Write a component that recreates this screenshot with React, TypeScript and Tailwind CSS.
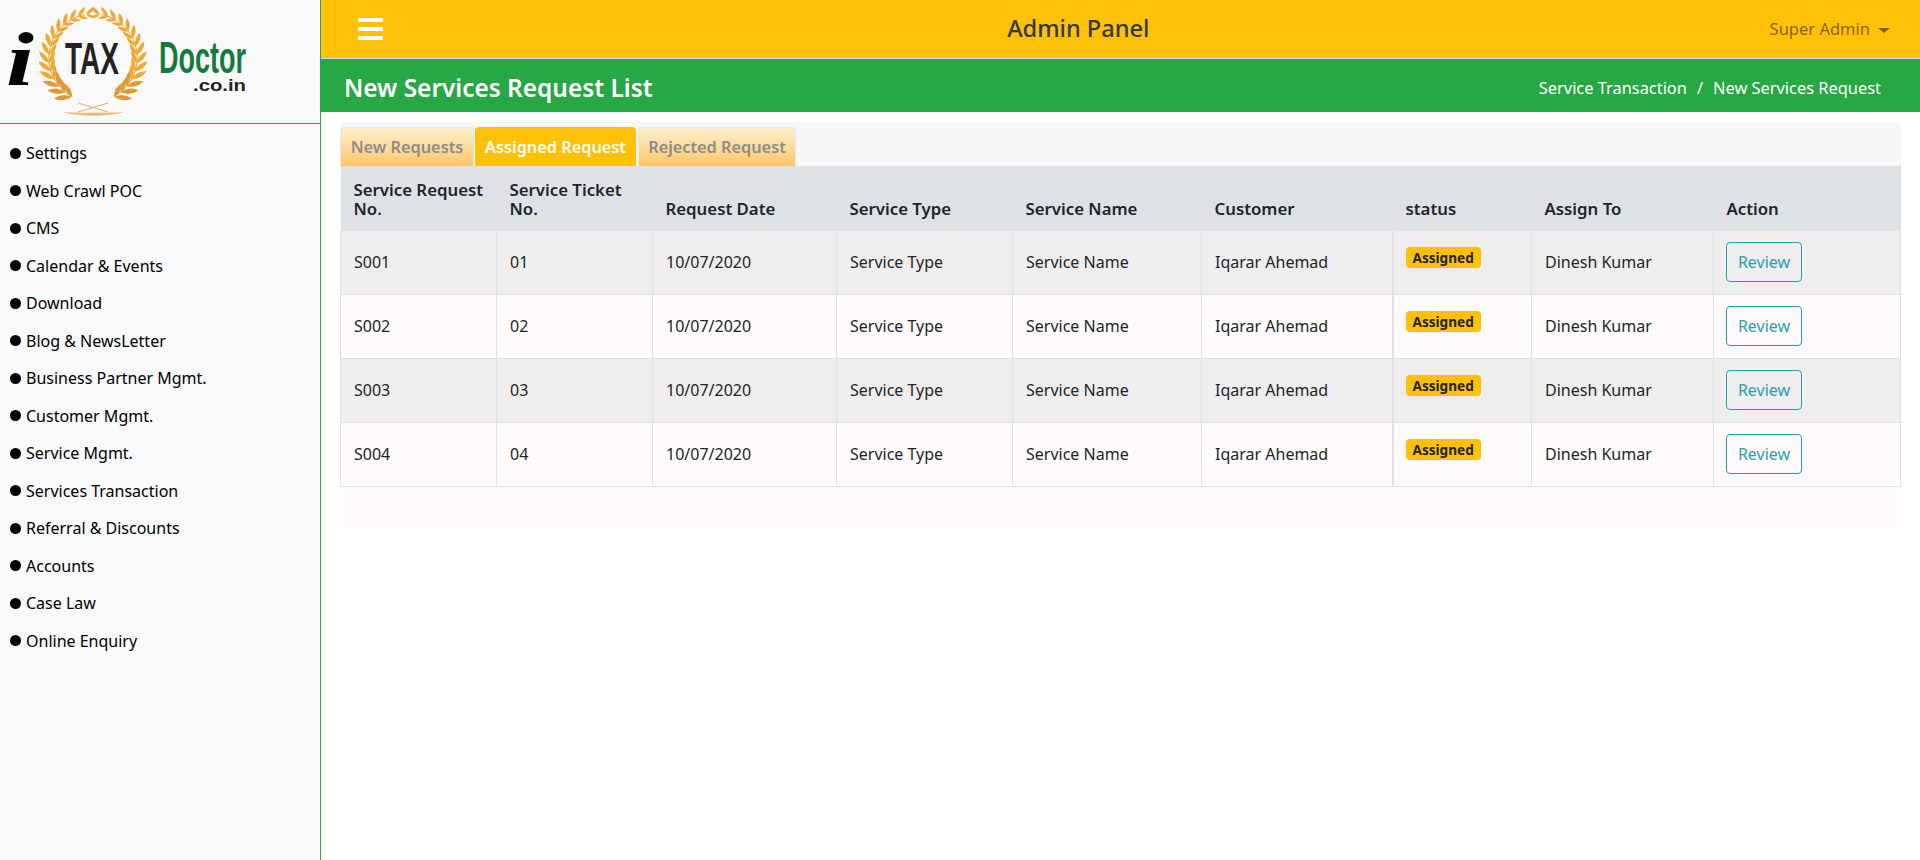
const menuItems = [
  "Settings",
  "Web Crawl POC",
  "CMS",
  "Calendar & Events",
  "Download",
  "Blog & NewsLetter",
  "Business Partner Mgmt.",
  "Customer Mgmt.",
  "Service Mgmt.",
  "Services Transaction",
  "Referral & Discounts",
  "Accounts",
  "Case Law",
  "Online Enquiry",
];

const requests = [
  { id: "S001", ticket: "01" },
  { id: "S002", ticket: "02" },
  { id: "S003", ticket: "03" },
  { id: "S004", ticket: "04" },
];

// one side of the wreath, angles in degrees from the top going clockwise
const leaves = Array.from({ length: 14 }, (_, i) => 9 + i * 11);

const Leaf = ({ angle, turn, len, wide, color }: { angle: number; turn: number; len: number; wide: number; color: string }) => (
  <path
    transform={`rotate(${angle}) translate(0 -44) rotate(${turn})`}
    d={`M0 0 Q ${len / 2} ${wide} ${len} 0 Q ${len / 2} ${-wide} 0 0Z`}
    fill={color}
  />
);

const Wreath = () => (
  <g>
    {[1, -1].map((side) => (
      <g key={side} transform={`translate(93 58) scale(${side} 1)`}>
        <path d="M8 -43.5 A44 44 0 0 1 22 38" fill="none" stroke="#e0a035" strokeWidth="1" />
        {leaves.map((a) => {
          const len = 11 + (a / 160) * 8;
          const wide = 3.4 + (a / 160) * 2;
          const color = a > 125 ? "#dd9b36" : "#f0a832";
          return (
            <g key={a}>
              <Leaf angle={a} turn={213} len={len} wide={wide} color={color} />
              <Leaf angle={a} turn={150} len={len - 2} wide={wide - 0.6} color={color} />
            </g>
          );
        })}
      </g>
    ))}
    <path d="M62 112 C 78 117 108 117 124 112 C 108 113 78 113 62 112Z" fill="#e9bd7c" />
    <path d="M78 103 L108 112 M108 103 L78 112" stroke="#e2b06a" strokeWidth="1" fill="none" />
  </g>
);

const Logo = () => (
  <svg width="320" height="123" viewBox="0 0 320 123" className="block">
    <Wreath />
    <text x="6" y="85" fontFamily="'Liberation Serif', serif" fontWeight="700" fontStyle="italic" fontSize="76" fill="#050505" textLength="28" lengthAdjust="spacingAndGlyphs">
      i
    </text>
    <text x="65" y="74" fontFamily="'Liberation Sans', sans-serif" fontWeight="700" fontSize="45" fill="#222" textLength="54" lengthAdjust="spacingAndGlyphs">
      TAX
    </text>
    <text x="159" y="73" fontFamily="'Liberation Sans', sans-serif" fontWeight="700" fontSize="44" fill="#137a3c" textLength="87" lengthAdjust="spacingAndGlyphs">
      Doctor
    </text>
    <text x="193" y="91" fontFamily="'Liberation Sans', sans-serif" fontWeight="700" fontSize="17" fill="#222" textLength="53" lengthAdjust="spacingAndGlyphs">
      .co.in
    </text>
  </svg>
);

const Sidebar = () => (
  <aside className="w-[321px] shrink-0 border-r border-[#28a745] bg-[#f8f9fa]">
    <div className="h-[124px] border-b border-[#28a745]">
      <Logo />
    </div>
    <ul className="pt-[10.5px]">
      {menuItems.map((item) => (
        <li key={item} className="flex h-[37.5px] items-center pl-[10px] text-[16px] text-black">
          <span className="mr-[5px] size-[11px] rounded-full bg-black" />
          {item}
        </li>
      ))}
    </ul>
  </aside>
);

const TopBar = () => (
  <header className="flex h-[59px] items-center justify-between border-b border-[#d9d9d9] bg-[#ffc107] pl-[37px] pr-[30px]">
    <div className="flex w-[25px] flex-col gap-[5px]">
      <span className="h-[4px] rounded-[1px] bg-white" />
      <span className="h-[4px] rounded-[1px] bg-white" />
      <span className="h-[4px] rounded-[1px] bg-white" />
    </div>
    <h1 className="ml-[4px] text-[23.6px] font-medium text-[#343a40]">Admin Panel</h1>
    <div className="flex items-center pt-[1px] text-[16.5px] text-black/50">
      Super Admin
      <span className="ml-[8px] mt-[1px] border-x-[6px] border-t-[5px] border-x-transparent border-t-black/50" />
    </div>
  </header>
);

const TitleBar = () => (
  <div className="flex h-[53px] items-center justify-between bg-[#28a745] pl-[23px] pr-[39px] pt-[6px] text-white">
    <h2 className="text-[24.4px] font-semibold">New Services Request List</h2>
    <div className="flex gap-[10px] text-[16.4px]">
      <span>Service Transaction</span>
      <span>/</span>
      <span>New Services Request</span>
    </div>
  </div>
);

const Tabs = () => (
  <div className="flex gap-[1px] border-b border-[#dee2e6] pt-[5px]">
    <button className="h-[39px] w-[134px] rounded-t-[4px] border border-b-0 border-[#e6e6e6] bg-gradient-to-b from-[#faf0cc] to-[#fec565] text-[16.3px] font-semibold text-[#8c8c8c]">
      New Requests
    </button>
    <button className="h-[39px] w-[161px] rounded-t-[4px] bg-[#ffc107] pt-[1px] text-[16.3px] font-semibold text-white">
      Assigned Request
    </button>
    <button className="ml-[1px] h-[39px] w-[158px] rounded-t-[4px] border border-b-0 border-[#e6e6e6] bg-gradient-to-b from-[#faf0cc] to-[#fec565] text-[16.3px] font-semibold text-[#8c8c8c]">
      Rejected Request
    </button>
  </div>
);

const RequestTable = () => (
  <table className="w-full table-fixed border-collapse text-[16px] text-[#212529]">
    <colgroup>
      <col className="w-[156px]" />
      <col className="w-[156px]" />
      <col className="w-[184px]" />
      <col className="w-[176px]" />
      <col className="w-[189px]" />
      <col className="w-[191px]" />
      <col className="w-[139px]" />
      <col className="w-[182px]" />
      <col />
    </colgroup>
    <thead>
      <tr className="h-[63px] bg-[#dee2e6] text-left text-[16.8px]">
        <th className="px-[13px] align-bottom pb-[12px] font-semibold leading-[19px]">Service Request No.</th>
        <th className="px-[13px] align-bottom pb-[12px] font-semibold leading-[19px]">Service Ticket No.</th>
        <th className="px-[13px] align-bottom pb-[12px] font-semibold leading-[19px]">Request Date</th>
        <th className="px-[13px] align-bottom pb-[12px] font-semibold leading-[19px]">Service Type</th>
        <th className="px-[13px] align-bottom pb-[12px] font-semibold leading-[19px]">Service Name</th>
        <th className="px-[13px] align-bottom pb-[12px] font-semibold leading-[19px]">Customer</th>
        <th className="px-[13px] align-bottom pb-[12px] font-semibold leading-[19px]">status</th>
        <th className="px-[13px] align-bottom pb-[12px] font-semibold leading-[19px]">Assign To</th>
        <th className="px-[13px] align-bottom pb-[12px] font-semibold leading-[19px]">Action</th>
      </tr>
    </thead>
    <tbody>
      {requests.map((row) => (
        <tr key={row.id} className="h-[64px] odd:bg-[#f0eded] even:bg-[#fffbfa]">
          <td className="border border-[#dee2e6] px-[13px]">{row.id}</td>
          <td className="border border-[#dee2e6] px-[13px]">{row.ticket}</td>
          <td className="border border-[#dee2e6] px-[13px]">10/07/2020</td>
          <td className="border border-[#dee2e6] px-[13px]">Service Type</td>
          <td className="border border-[#dee2e6] px-[13px]">Service Name</td>
          <td className="border border-[#dee2e6] px-[13px]">Iqarar Ahemad</td>
          <td className="border border-[#dee2e6] border-l-2 px-[12px] pb-[10px]">
            <span className="inline-block rounded-[4px] bg-[#ffc107] px-[7px] py-[3px] text-[13.6px] font-bold leading-[15px]">Assigned</span>
          </td>
          <td className="border border-[#dee2e6] px-[13px]">Dinesh Kumar</td>
          <td className="border border-[#dee2e6] pl-[12px]">
            <button className="h-[40px] w-[76px] rounded-[4px] border border-[#17a2b8] text-[#2a9fb5]">Review</button>
          </td>
        </tr>
      ))}
    </tbody>
  </table>
);

export default function App() {
  return (
    <div className="flex min-h-[860px] bg-white font-['Noto_Sans',sans-serif]">
      <Sidebar />
      <main className="min-w-0 flex-1">
        <TopBar />
        <TitleBar />
        <section className="mx-[19px] mt-[10px] rounded-t-[4px] bg-[#fffbfa] pb-[40px]">
          <div className="rounded-t-[4px] bg-[#f7f7f7]">
            <Tabs />
          </div>
          <RequestTable />
        </section>
      </main>
    </div>
  );
}
